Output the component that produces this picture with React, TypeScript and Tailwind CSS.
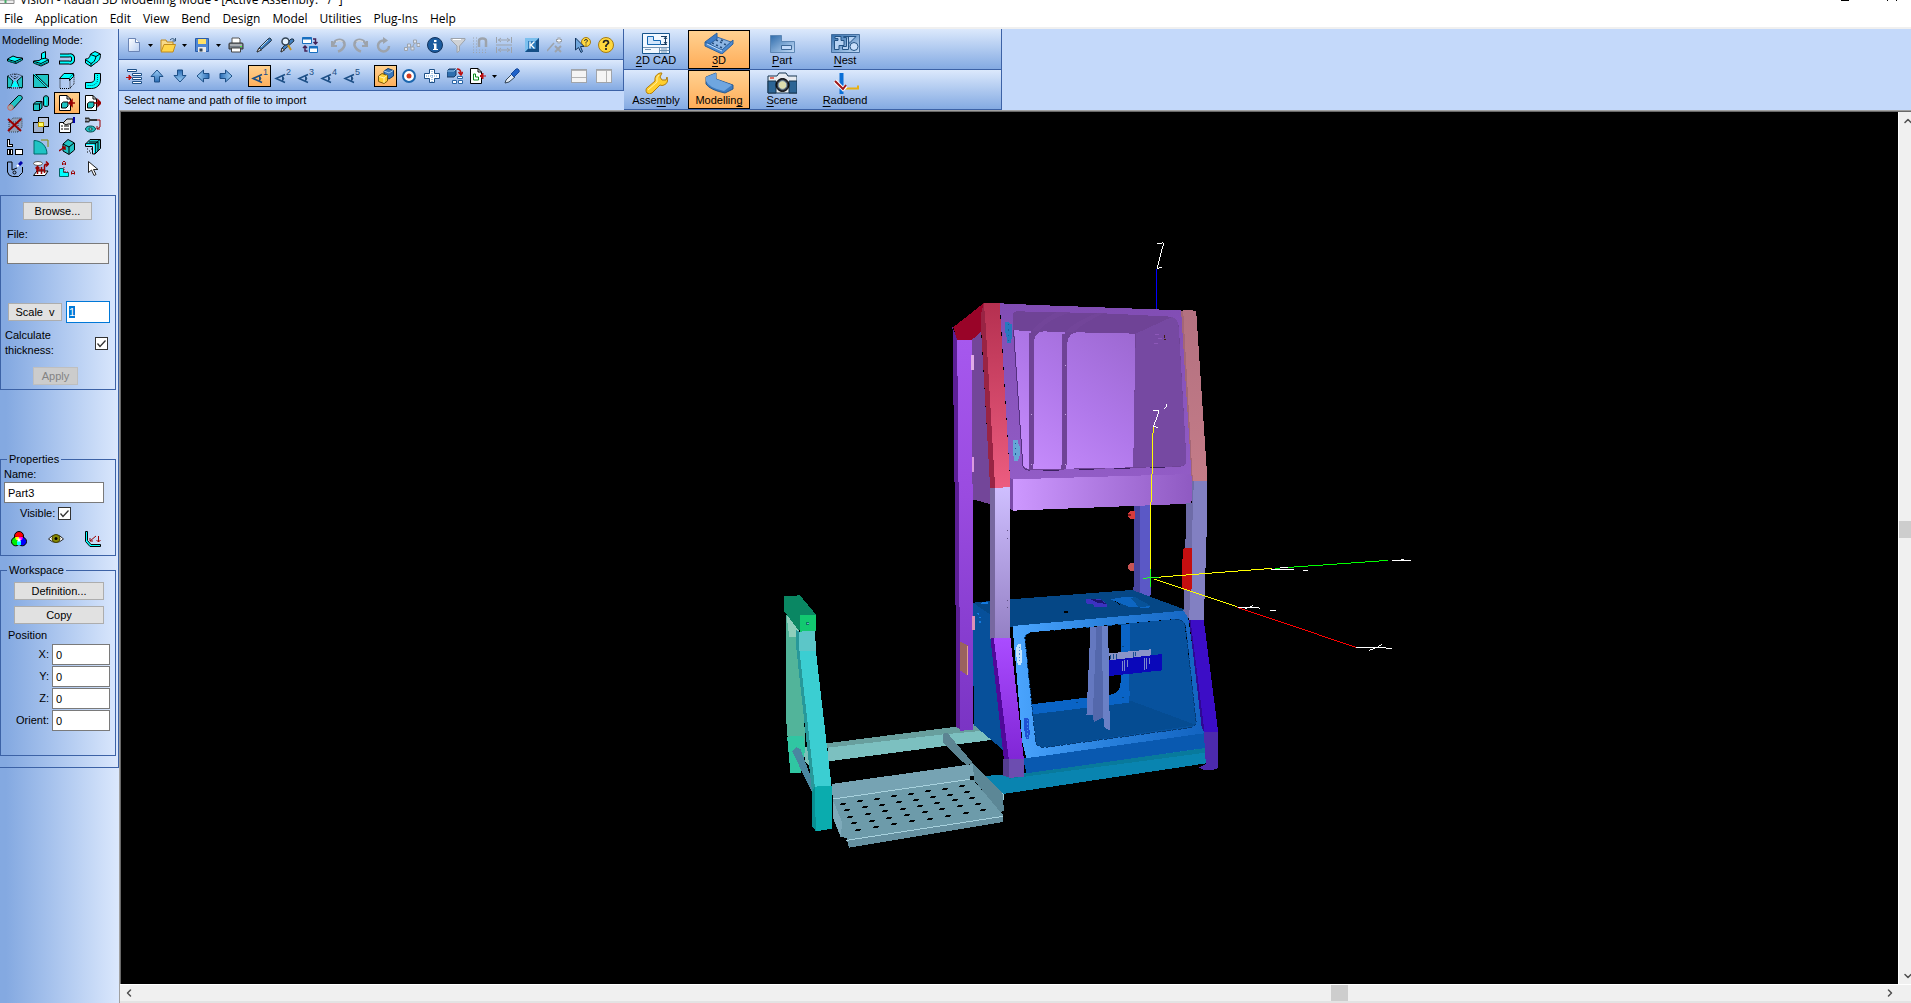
import { ReactNode } from "react";
import { ChevronDown, ChevronLeft, ChevronRight, ChevronUp } from "lucide-react";
import clsx from "clsx";

const MENU = ["File", "Application", "Edit", "View", "Bend", "Design", "Model", "Utilities", "Plug-Ins", "Help"];

const CYAN = "#00ffff";
const TEAL = "#1fc4c4";
const NAVY = "#1d4f86";
const GREY = "#9da3ab";

function Icon({ children, crisp }: { children: ReactNode; crisp?: boolean }) {
  return (
    <svg viewBox="0 0 16 16" className="h-4 w-4 shrink-0" fill="none" shapeRendering={crisp ? "crispEdges" : undefined} aria-hidden="true">
      {children}
    </svg>
  );
}

interface Tool {
  name: string;
  icon: ReactNode;
  active?: boolean;
  menu?: boolean;
}

/* ---------- sidebar mode icons ---------- */

const modeTools: Tool[] = [
  {
    name: "Flat",
    icon: (
      <Icon>
        <path d="M.5 8 6 5l4 1.500L15.500 7v2L9 12.500 4 11 .5 10z" fill={CYAN} stroke="#000" />
        <path d="M1 8.500 8 10.500 15 7.500M8.500 10.500v1.500" stroke="#000" />
        <path d="M1 10 8 12 15 9" stroke="#066" />
      </Icon>
    ),
  },
  {
    name: "Flange",
    icon: (
      <Icon>
        <path d="M.5 10 6 9.500 8.500 8V2.500L12.500.5v7l3 1v3L8 15 .5 12z" fill={CYAN} stroke="#000" />
        <path d="M1 10.500 8 12.500l7-3.500M8.500 8l4-1" stroke="#000" />
        <path d="M1 12 8 14l7-3" stroke="#066" />
      </Icon>
    ),
  },
  {
    name: "Hem",
    icon: (
      <Icon>
        <path d="M1 4.500h9a3 3 0 0 1 4 3.500 3 3 0 0 1-4 3.500H0" stroke="#000" strokeWidth="4" />
        <path d="M1 4.500h9a3 3 0 0 1 4 3.500 3 3 0 0 1-4 3.500H1" stroke={CYAN} strokeWidth="2" />
      </Icon>
    ),
  },
  {
    name: "Rolled sheet",
    icon: (
      <Icon>
        <path d="M.5 8C4 8 5 6 5.500 3L10 .5 15.500 3c0 4-1 7-5 9L6 15.500.5 12z" fill={CYAN} stroke="#000" />
        <path d="M1 9l5 3.500c3-1 4-3 5-7L15 3M6 12.500V15M5.500 3.500 11 5.500" stroke="#000" />
      </Icon>
    ),
  },
  {
    name: "Lofted bend",
    icon: (
      <Icon>
        <path d="M.5 3 6 8 4 14.500H.5z" fill={TEAL} stroke="#022" />
        <path d="M15.500 3 10 8l2 6.500h3.500z" fill={TEAL} stroke="#022" />
        <path d="M4 14 8 7l4 7z" fill={CYAN} />
        <path d="M1 3Q8-1 15 3M8 1v5M4 3l4 3 4-3M0 15h16" stroke="#000" strokeDasharray="1 1" />
      </Icon>
    ),
  },
  {
    name: "Split face",
    icon: (
      <Icon>
        <path d="M.5 1.500V14.500H14zM2.500 1.500h13v12.500z" fill={TEAL} stroke="#000" />
        <path d="M1 1l14 14" stroke={CYAN} />
      </Icon>
    ),
  },
  {
    name: "Sheet from solid",
    icon: (
      <Icon>
        <path d="M.5 5.500 5 .5h9.500l-4 5z" fill={CYAN} stroke="#000" />
        <path d="M1 5.500v10h10v-10M11 15l4-4V1" stroke="#000" strokeDasharray="1 1" />
        <path d="M10.500 5.500v2l4-4v-3" fill={CYAN} stroke="#000" />
      </Icon>
    ),
  },
  {
    name: "Elbow",
    icon: (
      <Icon>
        <path d="M9.500.5h6V7c0 5-4 8.500-9 8.500H.5v-6H5C8 9.500 9.500 8 9.500 6z" fill={CYAN} stroke="#000" />
        <path d="M12.500 2v5c0 3-3 5.500-6 5.500H2" stroke="#055" strokeDasharray="1 1" />
      </Icon>
    ),
  },
  {
    name: "Tube",
    icon: (
      <Icon>
        <path d="M1 11 11.500.5c3-.5 4.500 1.500 3.500 3.500L5 15z" fill={TEAL} stroke="#000" />
        <circle cx="3.500" cy="12.500" r="2.800" fill="#9aa" stroke="#c66" />
      </Icon>
    ),
  },
  {
    name: "Solids",
    icon: (
      <Icon>
        <path d="M10.500 3c0-3 5-3 5 0v7c0 2-5 2-5 0z" fill={TEAL} stroke="#000" />
        <path d="M12.500 3v7" stroke={CYAN} />
        <path d="M.5 9 3 6.500h6V13l-2.500 2.500h-6z" fill={TEAL} stroke="#000" />
        <path d="M.5 9h6v6.500M6.500 9 9 6.500" stroke="#000" />
      </Icon>
    ),
  },
  {
    name: "Import",
    active: true,
    icon: (
      <Icon>
        <path d="M.5.5H8L11.500 4v11.500H.5z" fill="#fff" stroke="#000" />
        <path d="M8 .5V4h3.500" stroke="#000" />
        <path d="M2.500 8.500 4.500 7H9v4l-2 2H2.500z" fill={TEAL} stroke="#000" />
        <path d="M16 8h-5M13 5l-3 3 3 3z" fill="#900" stroke="#900" strokeWidth="1.500" />
      </Icon>
    ),
  },
  {
    name: "Export",
    icon: (
      <Icon>
        <path d="M.5.5H8L11.500 4v11.500H.5z" fill="#fff" stroke="#000" />
        <path d="M8 .5V4h3.500" stroke="#000" />
        <path d="M2.500 8.500 4.500 7H9v4l-2 2H2.500z" fill={TEAL} stroke="#000" />
        <path d="M9 8h4M13 5l3 3-3 3z" fill="#900" stroke="#900" strokeWidth="1.500" />
      </Icon>
    ),
  },
  {
    name: "Delete",
    icon: (
      <Icon>
        <path d="M2 5 6 1h9v9l-4 5H2z" fill="#8ca0bd" />
        <path d="M2 5h9v10M2 5v10h9l4-5V1H6zM11 5l4-4" stroke="#345" strokeDasharray="1 1" />
        <path d="M1 2l13 12M14 2 1 14" stroke="#900" strokeWidth="2" />
      </Icon>
    ),
  },
  {
    name: "Combine",
    icon: (
      <Icon crisp>
        <path d="M5.500.5h10v9h-10z" fill="#b9c6dd" stroke="#000" />
        <path d="M.5 5.500h10v10H.5z" fill="#9fb0cc" stroke="#000" />
        <path d="M5.500 5.500h5v4h-5z" fill="#ff6" stroke="#b90" />
      </Icon>
    ),
  },
  {
    name: "Properties",
    icon: (
      <Icon>
        <path d="M.5 5.500h11v10H.5z" fill="#fff" stroke="#000" />
        <path d="M2 9h2M5 9h5M2 12h2M5 12h5" stroke="#000" />
        <path d="M4 6 8 2h6v3l-3 2H9L7 8z" fill="#ddd" stroke="#000" />
        <path d="M15 0v6" stroke="#00a" strokeWidth="2" />
      </Icon>
    ),
  },
  {
    name: "Edit feature",
    icon: (
      <Icon>
        <path d="M0 1.500h3.500l1 1.500H12M0 4.500h3.500L4.500 3" stroke="#333" strokeWidth="2" />
        <path d="M2 3h2" stroke="#ccc" />
        <ellipse cx="5.500" cy="12" rx="5" ry="3" fill={TEAL} stroke="#044" />
        <ellipse cx="5.500" cy="12" rx="2" ry="1" fill="#fff" stroke="#044" />
        <path d="M12 3h3v7l-3 2M12 9v3h3" stroke="#900" />
      </Icon>
    ),
  },
  {
    name: "Unfold",
    icon: (
      <Icon crisp>
        <path d="M.5.5h2v5h3v2h-5zM.5 10.500h2v5h-2zM3.500 10.500h2v5h-2zM8.500 10.500h7v5h-7z" fill="#fff" stroke="#000" />
      </Icon>
    ),
  },
  {
    name: "Fillet",
    icon: (
      <Icon>
        <path d="M1 1.500C8 1.500 14 7 14 15H1z" fill={TEAL} stroke="#066" />
        <path d="M8 1h7v7" stroke="#880" />
      </Icon>
    ),
  },
  {
    name: "Push face",
    icon: (
      <Icon>
        <path d="M4 5 9 .5 15.500 4v7L10 15.500 4 12z" fill={TEAL} stroke="#000" />
        <path d="M4 5l6 3v7M10 8l5-4" stroke="#000" />
        <path d="M0 12l6-4M3 8h3v3" stroke="#900" strokeWidth="1.500" />
      </Icon>
    ),
  },
  {
    name: "Shell",
    icon: (
      <Icon>
        <path d="M.5 5 5 .5h10.500v9L10 15V5z" fill={TEAL} stroke="#000" />
        <path d="M.5 5v2.500h7V15H10V5zM10 5l5-4.500M4 3h9v9" stroke="#000" />
        <path d="M1 5.500h8.500V14" stroke={CYAN} />
        <path d="M2 10h1M4 12h1M6 10h1M2 13h1M5 14h1" stroke="#000" />
      </Icon>
    ),
  },
  {
    name: "Sketch",
    icon: (
      <Icon>
        <path d="M.5 1v10q1 4 5 4.500h6l4-4V6M.5 1H5v8l5-2" stroke="#000" />
        <circle cx="7.500" cy="11.500" r="1.500" stroke="#000" />
        <path d="M10 5.500l2-2" stroke="#fff" strokeWidth="2" />
        <path d="M12 4 15 1" stroke="#00a" strokeWidth="3" />
      </Icon>
    ),
  },
  {
    name: "Flatten assembly",
    icon: (
      <Icon>
        <path d="M.5 14.500 4 10h11l-3 4.500z" fill="#fff" stroke="#000" />
        <ellipse cx="5" cy="2.500" rx="4.500" ry="2" fill="#fff" stroke="#555" />
        <path d="M4.500 13V5.500M2.500 7.500l2-2 2 2M8.500 13V6M11.500 12V5q0-2 3-2M13 .5 15.500 3 13 5.500M3 9h9" stroke="#900" strokeWidth="1.500" />
      </Icon>
    ),
  },
  {
    name: "Dimension",
    icon: (
      <Icon>
        <path d="M.5 7.500h4v4h5v4h-9z" fill={CYAN} stroke="#066" />
        <path d="M5 6v5h5" stroke="#900" strokeDasharray="1 1" />
        <path d="M3.500 4V1.500L5 0 6.500 1.500V4M4 3h3M12.500 13.500V11L14 9.500 15.500 11v2.500M12.500 12.500h3" stroke="#900" />
      </Icon>
    ),
  },
  {
    name: "Select",
    icon: (
      <Icon>
        <path d="M3.500.5v11l3-2.500 2.500 5.500 2-1-2.500-5H13z" fill="#fff" stroke="#222" />
      </Icon>
    ),
  },
];

/* ---------- toolbar icons ---------- */

function ArrowShape({ turn }: { turn: number }) {
  return (
    <Icon>
      <path
        transform={`rotate(${turn} 8 8)`}
        d="M8 2 14 8.500h-3.500V14h-5V8.500H2z"
        fill="url(#arrowFill)"
        stroke={NAVY}
      />
    </Icon>
  );
}

function ViewShape({ n }: { n: string }) {
  return (
    <svg viewBox="0 0 18 18" className="h-[18px] w-[18px] shrink-0" fill="none" aria-hidden="true">
      <path d="M11 7.500 2 11.500l9 4" stroke={NAVY} strokeWidth="1.500" />
      <path d="M8.500 9q2.500 2.500 0 5z" fill="#123" stroke={NAVY} />
      <text x="12" y="8" fontSize="9" fill={NAVY} fontFamily="Liberation Sans, sans-serif">{n}</text>
    </svg>
  );
}

const fileTools: Tool[][] = [
  [
    {
      name: "New",
      menu: true,
      icon: (
        <Icon>
          <path d="M2.500 1.500h7l4 4v9h-11z" fill="url(#pageFill)" stroke="#6b85b5" />
          <path d="M9.500 1.500v4h4" fill="#fff" stroke="#6b85b5" />
        </Icon>
      ),
    },
    {
      name: "Open",
      menu: true,
      icon: (
        <Icon>
          <path d="M1 14V3h5l1 2h6v3" fill="#f6d98a" stroke="#c08a1c" />
          <path d="M1 15 4 7.500h11.500L13 15z" fill="#ffd54a" stroke="#c08a1c" />
          <path d="M10 3q3-3 5 .5M15.500 1v3h-3" stroke="#357" />
        </Icon>
      ),
    },
    {
      name: "Save",
      menu: true,
      icon: (
        <Icon>
          <path d="M1.500 1.500h13v13h-13z" fill="#4e86d4" stroke="#2b5ca8" />
          <path d="M4 2h8v5H4z" fill="#ffe066" />
          <path d="M4 10h8v5H4z" fill="#e8e8ea" />
          <path d="M5.500 11.500h3v3h-3z" fill="#345" />
        </Icon>
      ),
    },
    {
      name: "Print",
      icon: (
        <Icon>
          <path d="M4 1h7l1 1v5H4z" fill="#fff" stroke="#555" />
          <path d="M1 7q0-1 1-1h12q1 0 1 1v5H1z" fill="#747c86" stroke="#333" />
          <path d="M2 8h12" stroke="#ddd" />
          <path d="M12 9.500h2" stroke="#4e4" />
          <path d="M3.500 11h9v4h-9z" fill="#fff" stroke="#444" />
        </Icon>
      ),
    },
  ],
  [
    {
      name: "Pen",
      icon: (
        <Icon>
          <path d="M1 15l2-4 9-9q2-2 3 0t0 2l-9 8z" fill="#3f7fc0" stroke="#234" />
          <path d="M1 15l2-4 2.500 2z" fill="#eee" stroke="#333" />
          <path d="M5 10l7-7" stroke="#bde" />
        </Icon>
      ),
    },
    {
      name: "Pen settings",
      icon: (
        <Icon>
          <path d="M2 15l1-4 9-9q3-1 3 2l-9 8z" fill="#3f7fc0" stroke="#234" />
          <path d="M2 15l1-4 2.500 2z" fill="#eee" stroke="#333" />
          <circle cx="6.500" cy="4.500" r="3.500" fill="#e4f2ff" stroke="#345" strokeWidth="1.500" />
          <path d="M9 8l3 5" stroke="#c89420" strokeWidth="2" />
        </Icon>
      ),
    },
    {
      name: "Switch window",
      icon: (
        <Icon>
          <path d="M.5.500h9v6h-9zM7.500 9.500h8v6h-8z" fill="#fff" stroke="#176fc0" />
          <path d="M.5 1.500h9M7.500 10.500h8" stroke="#176fc0" strokeWidth="2" />
          <path d="M11 2h2.500v5M11.500 5l2 2 2-2M5.500 14H3V9M1 11l2-2 2 2" stroke="#425" strokeWidth="1.500" />
        </Icon>
      ),
    },
  ],
  [
    {
      name: "Undo",
      icon: (
        <Icon>
          <path d="M2 4v5h5" stroke={GREY} strokeWidth="2" />
          <path d="M3 8q2-6 8-5 4 1 3.500 5.500Q13 13 8 14.500" stroke={GREY} strokeWidth="2.500" />
          <path d="M6 4.500q4-2 6.500 0" stroke="#dfe3e8" />
        </Icon>
      ),
    },
    {
      name: "Redo",
      icon: (
        <Icon>
          <path d="M14 4v5H9" stroke={GREY} strokeWidth="2" />
          <path d="M13 8q-2-6-8-5-4 1-3.500 5.500Q3 13 8 14.500" stroke={GREY} strokeWidth="2.500" />
          <path d="M10 4.500q-4-2-6.500 0" stroke="#dfe3e8" />
        </Icon>
      ),
    },
    {
      name: "Refresh",
      icon: (
        <Icon>
          <path d="M13 9a5.500 5.500 0 1 1-5-5.500" stroke={GREY} strokeWidth="2.500" />
          <path d="M7 0v7l5-3.500z" fill={GREY} />
        </Icon>
      ),
    },
  ],
  [
    {
      name: "Nodes",
      icon: (
        <Icon>
          <path d="M2 12l3-3 3 2 3-6 4 3" stroke={GREY} />
          <path d="M.5 10.500h3v3h-3zM3.500 7h3v3h-3zM7 10h3v3H7zM9.500 3h3v3h-3zM13 6.500h3v3h-3z" fill="#dfe6f2" stroke={GREY} />
        </Icon>
      ),
    },
    {
      name: "Information",
      icon: (
        <Icon>
          <circle cx="8" cy="8" r="7.500" fill="#1c5c9e" stroke="#12335e" />
          <path d="M7 3h2.500v2H7zM6 6.500h3.500V12H11v1H6v-1h1V7.500H6z" fill="#fff" />
        </Icon>
      ),
    },
    {
      name: "Filter",
      icon: (
        <Icon>
          <path d="M1 1.500h14V3L9.500 9v5L7 15.500V9L1 3z" fill="#cfd2d6" stroke={GREY} />
          <path d="M3 2.500h8" stroke="#fff" />
        </Icon>
      ),
    },
    {
      name: "Snap",
      icon: (
        <Icon>
          <path d="M6 10V4q0-2.500 3.500-2.500T13 4v6" stroke={GREY} strokeWidth="2.500" />
          <path d="M0 1h5M0 4h4M0 7h4M0 10h4M0 13h15M0 15.500h15" stroke={GREY} strokeDasharray="1 2" />
        </Icon>
      ),
    },
    {
      name: "Distance",
      icon: (
        <Icon>
          <path d="M.5 0v6M15.500 0v6M2 3h12M.5 10v6M15.500 10v6M2 13h12M0 8h16M5 1 2.500 3 5 5M11 1l2.500 2L11 5M5 11l-2.500 2L5 15M11 11l2.500 2-2.500 2" stroke={GREY} />
        </Icon>
      ),
    },
  ],
  [
    {
      name: "Keyboard",
      icon: (
        <Icon>
          <path d="M1 1h14v14H1z" fill="#2f7dbd" />
          <path d="M1 15V1h14l-3 3H4v8z" fill="#7cc0ee" />
          <path d="M1 15h14V1l-3 3v8H4z" fill="#154f86" />
          <path d="M6 4.500v7M10.500 4.500 7 8l3.500 3.500" stroke="#fff" strokeWidth="1.300" />
        </Icon>
      ),
    },
    {
      name: "Points",
      icon: (
        <Icon>
          <path d="M0 14 7 6" stroke={GREY} strokeWidth="1.500" />
          <path d="M9 3.500h6M12 .5v6" stroke={GREY} strokeWidth="3" />
          <path d="M8 9l6 6M14 9l-6 6" stroke={GREY} strokeWidth="2" />
          <path d="M10 3.500h4M12 1.500v4" stroke="#fff" />
        </Icon>
      ),
    },
  ],
  [
    {
      name: "Context help",
      icon: (
        <Icon>
          <circle cx="11" cy="5" r="4.500" fill="#ffd83e" stroke="#a67c12" />
          <path d="M9.500 4q0-1.500 1.500-1.500T12.500 4L11 5.500v1M11 7.500v1" stroke="#333" />
          <path d="M.5 1v12l3-2.500L6 15.500l1.500-1L5.500 9.500H9z" fill="#6fa6dc" stroke="#16365f" />
        </Icon>
      ),
    },
    {
      name: "Help",
      icon: (
        <Icon>
          <circle cx="8" cy="8" r="7.500" fill="#ffd83e" stroke="#a67c12" />
          <path d="M5.500 6q0-2.500 2.500-2.500T10.500 6L8 8.500v1.500M8 11v2" stroke="#222" strokeWidth="1.700" />
        </Icon>
      ),
    },
  ],
];

const viewTools: Tool[][] = [
  [
    {
      name: "Tree",
      icon: (
        <Icon>
          <path d="M1.500 1.500h9v2h-9zM6.500 5.500h9v2h-9zM6.500 9.500h9v2h-9zM6.500 13.500h9v2h-9z" fill="#fff" stroke={NAVY} />
          <path d="M0 9.500h5M3 7l2.500 2.500L3 12z" fill="#b11" stroke="#b11" />
        </Icon>
      ),
    },
    { name: "Up", icon: <ArrowShape turn={0} /> },
    { name: "Down", icon: <ArrowShape turn={180} /> },
    { name: "Left", icon: <ArrowShape turn={270} /> },
    { name: "Right", icon: <ArrowShape turn={90} /> },
  ],
  [
    { name: "View 1", active: true, icon: <ViewShape n="1" /> },
    { name: "View 2", icon: <ViewShape n="2" /> },
    { name: "View 3", icon: <ViewShape n="3" /> },
    { name: "View 4", icon: <ViewShape n="4" /> },
    { name: "View 5", icon: <ViewShape n="5" /> },
  ],
  [
    {
      name: "Shaded",
      active: true,
      icon: (
        <Icon>
          <path d="M6 3l4-2.500 5.500 2V8L11 11 6 9z" fill="#3b78bd" stroke="#173c68" />
          <path d="M6 3l5 2 4-2.500" stroke="#a8cdf0" />
          <path d="M.5 8 4 5.500 9.500 7.500V13L6 15.500l-5.500-2z" fill="#ffcf33" stroke="#7b5a08" />
          <path d="M1 8.500 6 10l3-2.500M6 10v5" stroke="#fff3b0" />
        </Icon>
      ),
    },
    {
      name: "Target",
      icon: (
        <Icon>
          <circle cx="8" cy="8" r="6" fill="#fff" stroke="#1b66ae" strokeWidth="2" />
          <circle cx="8" cy="8" r="2.500" fill="#d33a1c" />
        </Icon>
      ),
    },
    {
      name: "Add section",
      icon: (
        <Icon>
          <path d="M5.500 1.500h5v4h5v5h-5v4h-5v-4h-5v-5h5z" fill="#fff" stroke={NAVY} />
          <path d="M8 3v11M2 8h12" stroke="#5a93cc" strokeDasharray="1 1" />
        </Icon>
      ),
    },
    {
      name: "Explode",
      icon: (
        <Icon>
          <path d="M0 3l2-2h7v6l-2 2H0z" fill="#2f6faf" stroke="#163b66" />
          <path d="M0 3h7l2-2" stroke="#9cc8ee" />
          <path d="M10 1q4 0 4 5M11.500 4l2.500 3 2-3" stroke="#b11" strokeWidth="1.500" />
          <path d="M10.500 8.500h5v2h-5zM5.500 12.500h4v3h-4zM11.500 12.500h4v3h-4z" fill="#fff" stroke="#2a65a5" />
        </Icon>
      ),
    },
    {
      name: "Import part",
      menu: true,
      icon: (
        <Icon>
          <path d="M.5.500H8L11.500 4v11.500H.5z" fill="#fff" stroke="#000" />
          <path d="M8 .5V4h3.500" stroke="#000" />
          <path d="M3.500 6v6h5V9h-3V6z" stroke="#0a8a1a" />
          <path d="M16 8h-5M13 5l-3 3 3 3z" fill="#b11" stroke="#b11" />
        </Icon>
      ),
    },
    {
      name: "Picker",
      icon: (
        <Icon>
          <path d="M1 15l1-3 6-6 3 3-6 5z" fill="#dfe9f5" stroke="#345" />
          <path d="M7 6l5-5q2-1 3 1t-1 3l-4 4z" fill="#1f62c8" stroke="#174a9c" />
        </Icon>
      ),
    },
  ],
];

function ToolButton({ tool }: { tool: Tool }) {
  return (
    <>
      <button
        type="button"
        aria-label={tool.name}
        aria-pressed={tool.active}
        className={clsx(
          "flex h-[22px] w-[23px] items-center justify-center",
          tool.active && "border border-black bg-linear-to-b from-[#ffd08c] to-[#ffb05c]"
        )}
      >
        {tool.icon}
      </button>
      {tool.menu && (
        <button type="button" aria-label={`${tool.name} options`} className="flex h-[22px] w-[11px] items-center justify-center">
          <svg viewBox="0 0 5 3" className="h-[3px] w-[5px]" aria-hidden="true">
            <path d="M0 0h5L2.500 3z" />
          </svg>
        </button>
      )}
    </>
  );
}

/* ---------- mode switch panel ---------- */

function BigIcon({ children }: { children: ReactNode }) {
  return (
    <svg viewBox="0 0 30 22" className="h-[22px] w-[30px]" fill="none" aria-hidden="true">
      {children}
    </svg>
  );
}

interface Mode {
  label: [string, string, string];
  icon: ReactNode;
  active?: boolean;
}

const modeRows: Mode[][] = [
  [
    {
      label: ["", "2", "D CAD"],
      icon: (
        <BigIcon>
          <path d="M1.500 1.500h27v20h-27z" fill="#f2f8ff" stroke="#16548c" />
          <path d="M6.500 12.500v-8h6v4h7v4z" fill="#d2e6fc" stroke="#1567b0" />
          <path d="M2 15.500h26M18.500 16v5M18.500 18.500h10M4 17.500h6M20 17h6M20 20h6" stroke="#7395b5" />
          <path d="M20 4.500h6M20 12.500h6M24.500 5v7M23 7l1.500-2L26 7M23 10l1.500 2 1.500-2" stroke="#163d63" />
        </BigIcon>
      ),
    },
    {
      label: ["", "3", "D"],
      active: true,
      icon: (
        <BigIcon>
          <path d="M3 10 13 5l14 5-9 10z" fill="#8db6e4" stroke="#3a6ca8" />
          <path d="M1 10 13 1v6L4 13z" fill="#3d7dc8" stroke="#2d629f" />
          <path d="M1 10v4l17 8 11-10V8l-11 10z" fill="#4d8ad0" stroke="#2d629f" />
          <path d="M3 12 18 19" stroke="#c6e0fa" />
          <path d="M8 11l2 .8M12 8l2 .8M12 13l2 .8M16 10l2 .8M16 15l2 .8M20 12l2 .8M17 8l2 .8" stroke="#264f80" strokeWidth="1.500" />
        </BigIcon>
      ),
    },
    {
      label: ["", "P", "art"],
      icon: (
        <BigIcon>
          <path d="M3.500 3.500h11v6h13v11h-24z" fill="url(#partFill)" stroke="#5d87b5" />
          <path d="M14.500 13.500h10v4h-10z" fill="#c2dafa" stroke="#3d6797" />
        </BigIcon>
      ),
    },
    {
      label: ["", "N", "est"],
      icon: (
        <BigIcon>
          <path d="M1.500 2.500h28v18h-28z" fill="url(#partFill)" stroke="#456f9f" />
          <path d="M5 4.500h6v4h3v5H9v4H4.500v-9H8v-2H5zM12.500 17.500v-3h4v-9h-3v-1h5v13zM18 4.500h8l-7 7z" fill="#b7d3f4" stroke="#235385" />
          <circle cx="24" cy="14.500" r="4" fill="#c9e0fb" stroke="#235385" />
        </BigIcon>
      ),
    },
  ],
  [
    {
      label: ["Asse", "m", "bly"],
      icon: (
        <BigIcon>
          <path d="M5 18q0-2 2-3l7-6q-1-6 5-8h2l-2 4 2 3h4l1-3q2 6-3 8-2 1-4 0l-8 8q-3 2-5 0-1-1-1-3z" fill="#ffcf2e" stroke="#b07d10" />
          <path d="M7 18l9-8q-1-5 2-7" stroke="#fff0a8" />
        </BigIcon>
      ),
    },
    {
      label: ["Modellin", "g", ""],
      active: true,
      icon: (
        <BigIcon>
          <path d="M2 5 12 1v6l17 6v4l-8 4Q6 18 2 12z" fill="#3f7cc0" stroke="#28598f" />
          <path d="M2 5 12 1v6l16 6-8 6Q5 16 2 9z" fill="#6fa6e0" />
        </BigIcon>
      ),
    },
    {
      label: ["", "S", "cene"],
      icon: (
        <BigIcon>
          <path d="M1 4h9l2-3h7l2 3h9v17H1z" fill="#e7ebf0" stroke="#16344f" />
          <path d="M1 9h8v12H1zM22 9h8v12h-8z" fill="#2d6595" stroke="#16344f" />
          <path d="M3 6h4" stroke="#d43" strokeWidth="1.500" />
          <circle cx="15.500" cy="13" r="6.500" fill="#2a2f38" stroke="#000" />
          <circle cx="15.500" cy="13" r="4.300" fill="#dcdcae" stroke="#7a94ad" />
        </BigIcon>
      ),
    },
    {
      label: ["", "R", "adbend"],
      icon: (
        <BigIcon>
          <path d="M11.500 1v21" stroke="#0a6fd6" strokeWidth="4" />
          <path d="M15 16.500h13v-3" stroke="#e8b010" strokeWidth="2" />
          <path d="M5 9l8 8 3-3" stroke="#fff" strokeWidth="4" />
          <path d="M5 9l8 8 3-4" stroke="#a01818" strokeWidth="2" />
        </BigIcon>
      ),
    },
  ],
];

function ModeButton({ mode }: { mode: Mode }) {
  const [before, key, after] = mode.label;
  return (
    <button
      type="button"
      aria-pressed={!!mode.active}
      className={clsx(
        "flex h-[39px] w-[62px] flex-col items-center border pt-px text-[11px] leading-3",
        mode.active ? "border-black bg-linear-to-b from-[#ffd190] to-[#ffad58]" : "border-transparent"
      )}
    >
      {mode.icon}
      <span>
        {before}
        <span className="underline underline-offset-2">{key}</span>
        {after}
      </span>
    </button>
  );
}

/* ---------- sidebar controls ---------- */

const pushButton = "h-[18px] border border-[#adadad] bg-[#e1e1e1] text-center leading-4";
const textBox = "border border-[#7a7a7a] bg-white pl-[3px] pr-0 leading-4 outline-none";

function Tick({ id }: { id: string }) {
  return (
    <span className="relative block h-[13px] w-[13px]">
      <input id={id} type="checkbox" defaultChecked className="peer block h-[13px] w-[13px] appearance-none border border-[#333] bg-white" />
      <svg viewBox="0 0 13 13" className="pointer-events-none absolute inset-0 hidden peer-checked:block" fill="none" aria-hidden="true">
        <path d="M2.500 6.500 5 9.500l5.500-6" stroke="#333" strokeWidth="1.300" />
      </svg>
    </span>
  );
}

function Field({ label }: { label: string }) {
  return (
    <label className="flex items-center justify-end gap-[3px]">
      {label}
      <input defaultValue="0" className={clsx(textBox, "h-[21px] w-[58px]")} />
    </label>
  );
}

function Sidebar() {
  return (
    <aside className="w-[119px] shrink-0 bg-linear-to-r from-[#84a9e1] from-5% to-[#dbe8fd]">
      <div className="border-b border-r border-[#3c62a6] pb-[11px] pt-1">
        <p className="pl-[2px] leading-[15px]">Modelling Mode:</p>
        <div className="grid w-[106px] grid-cols-4 pl-[2px]">
          {modeTools.map((tool) => (
            <button
              key={tool.name}
              type="button"
              aria-label={tool.name}
              className={clsx(
                "flex h-[22px] items-center justify-center",
                tool.active && "border border-black bg-linear-to-b from-[#ffd08c] to-[#ffb05c]"
              )}
            >
              {tool.icon}
            </button>
          ))}
        </div>

        <section className="mr-[2px] mt-[15px] border border-[#3c62a6] pb-1 pl-[6px] pr-[5px] pt-1.5">
          <button type="button" className={clsx(pushButton, "ml-4 block w-[69px]")}>Browse...</button>
          <label htmlFor="file" className="mt-[7px] block leading-[14px]">File:</label>
          <input id="file" readOnly className="mt-[2px] block h-[21px] w-[102px] border border-[#7a7a7a] bg-[#f0f0f0] px-1 outline-none" />
          <div className="mt-[37px] flex items-center justify-between">
            <button type="button" className={clsx(pushButton, "ml-px w-[54px] whitespace-pre")}>{"Scale  v"}</button>
            <input
              aria-label="Scale"
              defaultValue="1"
              autoFocus
              onFocus={(event) => event.target.select()}
              className="h-[22px] w-[44px] border border-[#0078d7] bg-white pl-[2px] leading-4 caret-[#ff8728] outline-none selection:bg-[#0078d7] selection:text-white"
            />
          </div>
          <div className="-ml-[2px] mt-[5px] flex items-center justify-between pr-[2px]">
            <label htmlFor="thickness" className="w-16 leading-[15px]">Calculate thickness:</label>
            <Tick id="thickness" />
          </div>
          <button type="button" disabled className="ml-[26px] mt-[9px] block h-[18px] w-[45px] border border-[#bfbfbf] bg-[#cccccc] leading-4 text-[#838383]">
            Apply
          </button>
        </section>

        <fieldset className="mr-[2px] mt-[61px] border border-[#3c62a6] pb-2 pl-[3px]">
          <legend className="ml-[3px] px-[2px] leading-4">Properties</legend>
          <label htmlFor="name" className="block leading-[15px]">Name:</label>
          <input id="name" defaultValue="Part3" className={clsx(textBox, "block h-[21px] w-[100px]")} />
          <div className="mt-1 flex h-[13px] items-center gap-[3px] pl-4">
            <label htmlFor="visible">Visible:</label>
            <Tick id="visible" />
          </div>
          <div className="mt-[11px] flex gap-[21px] pl-[7px]">
            <button type="button" aria-label="Colour">
              <Icon>
                <circle cx="8" cy="5" r="4.500" fill="#f00" stroke="#000" />
                <circle cx="4.800" cy="10.500" r="4.300" fill="#0e0" stroke="#000" />
                <circle cx="11.200" cy="10.500" r="4.300" fill="#00f" stroke="#000" />
                <path d="M4 6h4v3H5z" fill="#ff0" />
                <path d="M8 6h4l-1 3H8z" fill="#f0f" />
                <path d="M6 10h4v4H6z" fill="#0ff" />
                <path d="M6.500 7.500h3v3h-3z" fill="#fff" />
              </Icon>
            </button>
            <button type="button" aria-label="Visibility">
              <Icon>
                <path d="M.5 8Q8-.5 15.500 8 8 15 .5 8z" fill="#fff" stroke="#222" />
                <circle cx="8" cy="7.500" r="4" fill="#8a8a00" stroke="#440" />
                <circle cx="8" cy="7.500" r="1.500" fill="#000" />
              </Icon>
            </button>
            <button type="button" aria-label="Bend angle">
              <Icon>
                <path d="M.5.500h2v9l3.500 4h9.500v2H5l-4.500-5z" fill={CYAN} stroke="#000" />
                <path d="M11 5 5 10M5 7v3h3M13.500 5v6M11.500 9l2 2 2-2" stroke="#900" />
              </Icon>
            </button>
          </div>
        </fieldset>

        <fieldset className="mr-[2px] mt-1.5 border border-[#3c62a6] pb-6 pl-[7px] pr-[5px]">
          <legend className="-ml-px px-[2px] leading-4">Workspace</legend>
          <button type="button" className={clsx(pushButton, "ml-[6px] mt-1 block w-[90px]")}>Definition...</button>
          <button type="button" className={clsx(pushButton, "ml-[6px] mt-1.5 block w-[90px]")}>Copy</button>
          <p className="mt-1 leading-[14px]">Position</p>
          <div className="mt-[2px] flex flex-col gap-px">
            <Field label="X:" />
            <Field label="Y:" />
            <Field label="Z:" />
            <Field label="Orient:" />
          </div>
        </fieldset>
      </div>
    </aside>
  );
}

/* ---------- 3D scene ---------- */

// tread perforations: first and last hole of every row
const holeRows = [
  [219, 672, 575, 618],
  [231, 690, 590, 636],
  [240, 710, 605, 653],
  [251, 730, 622, 671],
  [262, 750, 639, 690],
];

function Scene() {
  return (
    <svg
      viewBox="120 112 1778 872"
      preserveAspectRatio="xMidYMid slice"
      className="absolute inset-0 h-full w-full"
      shapeRendering="crispEdges"
      role="img"
      aria-label="Assembly model"
    >
      <defs>
        <linearGradient id="post" x1="0" y1="0" x2="0" y2="1">
          <stop offset="0" stopColor="#a658ee" />
          <stop offset=".4" stopColor="#9a4be0" />
          <stop offset="1" stopColor="#7a34c4" />
        </linearGradient>
        <linearGradient id="redFace" x1="0" y1="0" x2="0" y2="1">
          <stop offset="0" stopColor="#b53050" />
          <stop offset="1" stopColor="#ec5d80" />
        </linearGradient>
        <linearGradient id="lilac" x1="0" y1="0" x2="0" y2="1">
          <stop offset="0" stopColor="#cfbfff" />
          <stop offset="1" stopColor="#9480c4" />
        </linearGradient>
        <linearGradient id="frame" x1="0" y1="0" x2="0" y2="1">
          <stop offset="0" stopColor="#814db4" />
          <stop offset="1" stopColor="#955fc9" />
        </linearGradient>
        <linearGradient id="back" gradientUnits="userSpaceOnUse" x1="280" y1="740" x2="600" y2="340">
          <stop offset="0" stopColor="#c68cfc" />
          <stop offset=".5" stopColor="#b078ea" />
          <stop offset="1" stopColor="#9d69d2" />
        </linearGradient>
        <linearGradient id="lip" x1="0" y1="0" x2="1" y2="0">
          <stop offset="0" stopColor="#cd98ff" />
          <stop offset="1" stopColor="#8f5ac2" />
        </linearGradient>
        <linearGradient id="pink" x1="0" y1="0" x2="0" y2="1">
          <stop offset="0" stopColor="#b37180" />
          <stop offset="1" stopColor="#c47c88" />
        </linearGradient>
        <linearGradient id="blueFrame" x1="0" y1="0" x2="1" y2="0">
          <stop offset="0" stopColor="#4ca6ff" />
          <stop offset=".5" stopColor="#2880dc" />
          <stop offset="1" stopColor="#1263c0" />
        </linearGradient>
        <linearGradient id="leg" x1="0" y1="0" x2="0" y2="1">
          <stop offset="0" stopColor="#aa4cff" />
          <stop offset="1" stopColor="#8026d6" />
        </linearGradient>
      </defs>

      {/* guard rail, beam and tread */}
      <g transform="translate(770 580) scale(.33333)">
        <path d="M100 502 114 499 122 560 103 545z" fill="#7cc0b8" />
        <path d="M168 490 612 433 645 458 168 504z" fill="#689f9e" />
        <path d="M172 503 520 463 640 452 662 480 174 544z" fill="#7cc0c0" />
        <path d="M519 461 530 458 608 550 588 556 519 490z" fill="#5c8492" />
        <path d="M48 105 80 140 102 440 104 500 90 578 60 580 48 430z" fill="#52b49a" />
        <path d="M48 105 85 140 85 170 56 170z" fill="#8fcfbc" />
        <path d="M50 470 98 467 104 510 90 578 60 580z" fill="#30c6a2" />
        <path d="M65 514 78 502 90 508 132 620 125 638z" fill="#4a86a0" />
        <path d="M42 49 88 46 137 104 88 107 87 155 42 95z" fill="#0a8763" />
        <path d="M88 106 137 104 137 153 88 156z" fill="#12c870" />
        <path d="M108 125h9v10h-9z" fill="#0a7a60" />
        <path d="M111 128h5v5h-5z" fill="#6ac" />
        <path d="M78 150 86 155 88 212 133 620 125 640 78 210z" fill="#27989a" />
        <path d="M86 155 134 152 136 212 87 213z" fill="#5cc6c8" />
        <path d="M87 213 136 212 183 617 133 621z" fill="#3bced2" />
        <path d="M126 635 133 620 183 617 186 746 136 754 126 740z" fill="#0aacae" />
        <path d="M126 635 133 620 136 754 126 740z" fill="#089092" />

        <path d="M187 656 605 596 698 705 698 726 235 803 228 774 210 770 187 712z" fill="#6d9baa" />
        <path d="M183 612 608 552 610 597 187 657z" fill="#76a3b3" />
        <path d="M608 552 697 640 700 692 690 697 610 600z" fill="#5c8796" />
        <path d="M187 660 214 725 212 770 187 712z" fill="#7eaaba" />
        <path d="M230 780 698 710 698 726 235 803z" fill="#6590a0" />
        <path d="M187 657 605 597" stroke="#a8d2de" strokeWidth="3" />
        <path d="M228 781 698 709" stroke="#a8d2de" strokeWidth="3" />
        <path d="M697 640 700 660" stroke="#9fd3dd" strokeWidth="3" />
        <path d="M600 588h12v12h-12z" fill="#000" />
        {holeRows.map(([x1, y1, x2, y2]) =>
          [0, 1, 2, 3, 4, 5, 6, 7].map((i) => (
            <path
              key={`${x1}-${i}`}
              d="M-9 0h3v-3h15v3h-3v3H-9z"
              transform={`translate(${x1 + ((x2 - x1) * i) / 7} ${y1 + ((y2 - y1) * i) / 7})`}
              fill="#000"
            />
          ))
        )}
      </g>

      {/* lower cabinet */}
      <g transform="translate(930 480) scale(.33333)">
        <path d="M165 888 288 878 825 804 827 850 218 942z" fill="#0984b0" />
        <path d="M288 880 825 804 826 818 230 897z" fill="#087a9c" />
        <path d="M611 74 628 74 628 350 609 330z" fill="#48449e" />
        <path d="M628 74 663 72 660 352 628 345z" fill="#5b58c6" />
        <path d="M592 99 600 94 614 94 614 116 600 117 592 110z" fill="#d83c3c" />
        <path d="M592 256 600 250 611 250 611 272 600 272 592 266z" fill="#c85454" />
        <path d="M594 102 602 102 602 109 594 109z" fill="#801818" />

        <path d="M127 368 190 400 228 815 215 808 130 735z" fill="#07509a" />
        <path d="M127 368 240 358 605 330 772 392 740 405 247 440 180 440 180 404z" fill="#054786" />
        <path d="M150 368 175 366 170 373 152 373zM138 398 146 398 144 406zM146 410h6v4h-6zM145 422h6v8h-6z" fill="#147ae0" />
        <path d="M540 358 585 350 615 352 662 378 655 383 600 382z" fill="#0d66c2" />
        <path d="M600 353 615 352 662 378 625 382z" fill="#075298" />
        <path d="M540 358 565 368 570 376 560 368z" fill="#000" />
        <path d="M468 358 510 358 530 372 530 380 492 382 490 374 468 370z" fill="#3c32c0" />
        <path d="M482 358 510 359 528 372 500 368z" fill="#1c1470" />
        <path d="M400 393h14v5h-14z" fill="#000" />

        <path d="M280 460 760 415 800 740 330 806z" fill="#07529e" />
        <path d="M303 700 600 662 797 735 335 802 310 790z" fill="#054c92" />
        <path d="M303 672 570 635 598 632 596 668 470 683 306 703z" fill="#0a64c6" />
        <path d="M568 436 598 432 596 668 560 640z" fill="#0a64c6" />
        <path d="M283 478Q284 460 310 457L572 434 570 615Q566 640 540 644L303 673z" fill="#000" />
        <path d="M576 498h6v4h-6zM576 650h6v4h-6zM436 666h6v4h-6z" fill="#054786" />

        <path
          fillRule="evenodd"
          d="M246 438 770 391 822 762 288 836 276 790zM283 472 300 640 316 788Q322 803 345 802L780 743Q798 738 797 726L765 436Q760 416 735 417L310 456Q284 458 283 472z"
          fill="url(#blueFrame)"
        />
        <path d="M283 472 300 640 316 788Q322 803 345 802L780 743Q798 738 797 726L765 440Q760 418 735 418" fill="none" stroke="#043a74" strokeWidth="3" strokeDasharray="12 4" />
        <path d="M278 836 820 760 824 804 288 880z" fill="#0959b0" />
        <path d="M258 500 264 492 270 492 276 530 272 556 262 556 258 530z" fill="#c4e4fc" />
        <path d="M280 715 294 715 298 760 294 778 286 778 280 740z" fill="#1e50d4" />
        <path d="M268 500v50M290 720v54" stroke="#4a90e0" strokeWidth="3" strokeDasharray="4 6" />

        <path d="M480 441 498 441 487 705 468 704z" fill="#6478c0" />
        <path d="M498 440 517 437 518 712 490 726 487 705z" fill="#5468ac" />
        <path d="M515 437 533 437 538 752 522 742 517 700z" fill="#6a80c6" />
        <path d="M535 520 662 508 663 526 540 541z" fill="#8a94c8" />
        <path d="M537 541 695 522 695 571 537 588z" fill="#0a08ba" />
        <path d="M575 543v30M582 541v32M590 540v20M641 534v36M648 534v34M656 533v20" stroke="#7c88cc" strokeWidth="3" />
        <path d="M541 524v14M549 523v14M557 522v14M608 517v14M615 516v12" stroke="#1a4f94" strokeWidth="3" />
      </g>

      {/* uprights and upper cabinet */}
      <g transform="translate(930 220) scale(.33333)">
        <path d="M122 350 152 335 182 853 126 838z" fill="#734699" />
        <path d="M66 322 82 357 92 1532 78 1520 72 780z" fill="#5c1f96" />
        <path d="M80 357 124 358 126 780 129 1530 90 1532 84 780z" fill="url(#post)" />
        <path d="M123 405h9v45h-9z" fill="#e0aae8" />
        <path d="M126 711h6v45h-6z" fill="#dc9ae0" />
        <path d="M126 1188h9v42h-9z" fill="#dc90b8" />
        <path d="M87 1263 112 1277 110 1365 90 1352z" fill="#9a625e" />
        <path d="M112 1277 110 1365" stroke="#e0a090" strokeWidth="3" />
        <path d="M68 322 160 249 152 335 124 360 80 359z" fill="#990428" />

        <path d="M208 250 318 255 752 271 784 765 783 850 248 872 240 868 240 800z" fill="url(#frame)" />
        <path d="M248 282Q250 274 262 274L520 280 722 290Q742 296 745 320L768 722Q768 738 750 740L300 751Q282 750 277 738L249 330z" fill="#6f4396" />
        <path d="M616 341 724 291Q742 296 744 320L768 722Q767 737 750 739L607 742z" fill="#7649a2" />
        <path d="M305 333Q330 300 380 276L420 277Q350 300 325 333zM405 335Q440 300 500 280L520 280Q455 310 430 336z" fill="#724599" />
        <path d="M251 331 303 333 297 748 290 747 275 735z" fill="url(#back)" />
        <path d="M309 748 311 362Q314 337 338 334L403 337 394 746z" fill="url(#back)" />
        <path d="M408 746 411 367Q414 339 440 337L615 341 608 742z" fill="url(#back)" />
        <path d="M297 340 303 340 309 420 309 748 295 748zM396 342 404 342 408 420 407 746 393 746z" fill="#6f4396" />
        <path d="M249 330 277 738Q282 750 300 751" fill="none" stroke="#553080" strokeWidth="3" />
        <path d="M338 751h48M446 748h45M552 745h48M658 742h46" stroke="#3c2060" strokeWidth="3" />
        <path d="M674 343h12M672 370h12M684 355h12" stroke="#8c58b8" strokeWidth="3" />
        <path d="M702 345v10M700 358h6" stroke="#402010" strokeWidth="3" />
        <path d="M240 775 249 778 249 872 240 868z" fill="#7a4aa8" />
        <path d="M248 778 784 762 783 851 248 872z" fill="url(#lip)" />
        <path d="M222 305 236 305 238 313 245 313 245 352 240 368 228 368 230 358 224 335z" fill="#2878be" />
        <path d="M246 660 262 660 262 668 268 680 268 705 262 722 250 722z" fill="#66a6d6" />
        <path d="M234 312v50M256 668v50" stroke="#1a5c98" strokeWidth="3" strokeDasharray="4 12" />
        <path d="M303 582h3v3h-3zM403 582h3v3h-3zM405 434h3v3h-3zM303 731h3v3h-3zM403 731h3v3h-3z" fill="#c8a8e8" />

        <path d="M159 252 150 290 179 805 195 805 165 290z" fill="#992444" />
        <path d="M159 249 207 249 212 330 240 802 194 805 164 290z" fill="url(#redFace)" />
        <path d="M180 804 195 804 195 1256 180 1256z" fill="#7868a0" />
        <path d="M195 804 240 801 240 1256 195 1256z" fill="url(#lilac)" />
        <path d="M231 930h3v3h-3zM231 954h3v3h-3zM231 1140h3v3h-3zM231 1161h3v3h-3z" fill="#5c5080" />
        <path d="M180 1255 191 1255 236 1618 220 1618z" fill="#50089a" />
        <path d="M190 1255 240 1255 280 1618 235 1618z" fill="url(#leg)" />
        <path d="M219 1618 236 1618 236 1673 219 1667z" fill="#553e90" />
        <path d="M235 1618 280 1618 280 1670 235 1674z" fill="#6c4db0" />

        <path d="M752 275 760 271 792 783 784 783z" fill="#a46676" />
        <path d="M758 270 797 272 831 783 787 783z" fill="url(#pink)" />
        <path d="M768 850 784 850 785 783 792 783 780 1203 759 1172z" fill="#6e6ca8" />
        <path d="M790 783 831 783 829 920 820 1201 776 1201z" fill="#8280c2" />
        <path d="M757 988 763 984 785 984 783 1112 760 1110 753 1105z" fill="#c40e10" />
        <path d="M776 1201 784 1201 824 1538 814 1525z" fill="#2e0894" />
        <path d="M780 1201 820 1201 863 1535 822 1537z" fill="#3c0dc6" />
        <path d="M820 1537 863 1535 861 1648 822 1650 805 1643 826 1632z" fill="#4c2aac" />
      </g>

      {/* axes */}
      <g transform="translate(929 220) scale(.33333)" fill="none" strokeWidth="3">
        <path d="M682 148 680 168 680 267" stroke="#00f" />
        <path d="M682 72 701 68 701 75 683 145 698 142M672 572 689 572 672 620 686 622M710 553 710 560 706 566" stroke="#fff" />
        <path d="M671 620 668 750 664 860 663 1073" stroke="#ff0" />
      </g>
      <g transform="translate(1150 530) scale(.33333)" fill="none" strokeWidth="3">
        <path d="M5 143 365 115M12 148 260 230" stroke="#ff0" />
        <path d="M375 115 714 91" stroke="#0f0" />
        <path d="M260 232 617 352" stroke="#f00" />
        <path d="M-22 145 25 141M1 118 1 170" stroke="#2f2" />
        <path d="M726 91h57M753 88h8M363 118h69M390 113h24M459 121h15M360 241h18M262 232 300 232 325 233 330 236M285 235 302 230 308 226M617 352 668 352 725 355M655 361 680 352 695 343" stroke="#fff" />
      </g>
    </svg>
  );
}

function Viewport() {
  return (
    <main className="flex min-h-0 flex-1 flex-col border-l border-t border-[#a0a0a0]">
      <div className="flex min-h-0 flex-1 border-l border-t border-[#696969]">
        <div className="relative flex-1 overflow-hidden bg-black">
          <Scene />
        </div>
        <div className="flex w-[13px] flex-col overflow-hidden border-l border-white bg-[#f0f0f0] text-[#505050]">
          <button type="button" aria-label="Scroll up" className="flex h-[17px] w-[17px] items-center justify-center">
            <ChevronUp className="h-3 w-3" strokeWidth={3} />
          </button>
          <div className="grow-[392]" />
          <div className="h-[17px] bg-[#cdcdcd]" />
          <div className="grow-[429]" />
          <button type="button" aria-label="Scroll down" className="flex h-[17px] w-[17px] items-center justify-center">
            <ChevronDown className="h-3 w-3" strokeWidth={3} />
          </button>
        </div>
      </div>
      <div className="flex h-[19px] items-center border-b-2 border-t border-b-[#e3e3e3] border-t-white bg-[#f0f0f0] pr-[13px] text-[#505050]">
        <button type="button" aria-label="Scroll left" className="flex h-4 w-[17px] items-center justify-center">
          <ChevronLeft className="h-3 w-3" strokeWidth={3} />
        </button>
        <div className="grow-[1194]" />
        <div className="h-4 w-[17px] bg-[#cdcdcd]" />
        <div className="grow-[533]" />
        <button type="button" aria-label="Scroll right" className="flex h-4 w-[17px] items-center justify-center">
          <ChevronRight className="h-3 w-3" strokeWidth={3} />
        </button>
      </div>
    </main>
  );
}

/* ---------- header ---------- */

function ToolbarRow({ children }: { children: ReactNode }) {
  return (
    <div className="flex h-[31px] items-center border-b border-r border-[#3c62a6] bg-linear-to-b from-[#dce9fc] to-[#84aae2] pl-[3px] pt-[2px]">
      {children}
    </div>
  );
}

function Header() {
  return (
    <header className="flex h-[81px] bg-[#c4d9fa]">
      <div className="w-[505px] shrink-0">
        <ToolbarRow>
          <div className="flex gap-[5px]">
            {fileTools.map((group) => (
              <div key={group[0].name} className="flex">
                {group.map((tool) => <ToolButton key={tool.name} tool={tool} />)}
              </div>
            ))}
          </div>
        </ToolbarRow>
        <ToolbarRow>
          <div className="flex gap-[11px]">
            {viewTools.map((group) => (
              <div key={group[0].name} className="flex">
                {group.map((tool) => <ToolButton key={tool.name} tool={tool} />)}
              </div>
            ))}
          </div>
          <div className="ml-auto flex gap-[2px] pr-2">
            <button type="button" aria-label="Split rows" className="flex w-[23px] items-center justify-center">
              <Icon crisp>
                <path d="M.5 1.500h15v13H.5z" fill="#f4f4f4" stroke="#a0a4aa" />
                <path d="M1 2.500h14M1 9.500h14" stroke="#b4b4b4" />
              </Icon>
            </button>
            <button type="button" aria-label="Split columns" className="flex w-[23px] items-center justify-center">
              <Icon crisp>
                <path d="M.5 1.500h15v13H.5z" fill="#f4f4f4" stroke="#a0a4aa" />
                <path d="M1 2.500h14M10.500 3v11" stroke="#b4b4b4" />
              </Icon>
            </button>
          </div>
        </ToolbarRow>
        <p className="pl-[5px] leading-[18px]">Select name and path of file to import</p>
      </div>
      <nav aria-label="Modes" className="w-[378px] shrink-0">
        {modeRows.map((row, i) => (
          <div
            key={i}
            className="flex h-[41px] gap-px border-b border-r border-[#3c62a6] bg-linear-to-b from-[#dce9fc] to-[#84aae2] pl-px pt-px last:h-10 last:pt-0"
          >
            {row.map((mode) => <ModeButton key={mode.label.join("")} mode={mode} />)}
          </div>
        ))}
      </nav>
    </header>
  );
}

export default function App() {
  return (
    <div className="flex h-screen flex-col overflow-hidden bg-white font-['Liberation_Sans',Arial,sans-serif] text-[11px] text-black">
      <svg className="absolute h-0 w-0" aria-hidden="true">
        <defs>
          <linearGradient id="arrowFill" x1="0" y1="0" x2="0" y2="1">
            <stop offset="0" stopColor="#9fd0f8" />
            <stop offset="1" stopColor="#2a6cb4" />
          </linearGradient>
          <linearGradient id="pageFill" x1="0" y1="0" x2="1" y2="1">
            <stop offset="0" stopColor="#fff" />
            <stop offset="1" stopColor="#b9cff2" />
          </linearGradient>
          <linearGradient id="partFill" x1="0" y1="0" x2="1" y2="1">
            <stop offset="0" stopColor="#2f6cab" />
            <stop offset="1" stopColor="#c4dcf8" />
          </linearGradient>
        </defs>
      </svg>

      <div className="flex h-2 shrink-0 items-end justify-between overflow-hidden font-['Open_Sans',sans-serif] text-xs leading-4">
        <div className="flex items-end gap-[5px]">
          <svg viewBox="0 0 15 8" className="h-2 w-[15px]" fill="none" aria-hidden="true">
            <path d="M0 0h14v3.500H0" fill="#eee" stroke="#888" />
            <path d="M5.500 0v3" stroke="#4a6" strokeWidth="2" />
          </svg>
          <h1>Vision - Radan 3D Modelling Mode - [Active Assembly: */*]</h1>
        </div>
        <svg viewBox="0 0 70 8" className="h-2 w-[70px]" fill="none" stroke="#000" aria-hidden="true">
          <path d="M0 .5h8M46.500 0v1M55.500 0v1" />
        </svg>
      </div>
      <nav className="flex h-[21px] shrink-0 gap-3 border-b-2 border-[#f0f0f0] pl-1 font-['Open_Sans',sans-serif] text-xs">
        {MENU.map((item) => (
          <button key={item} type="button" className="h-[19px] leading-[21px]">{item}</button>
        ))}
      </nav>

      <div className="flex min-h-0 flex-1">
        <Sidebar />
        <div className="flex min-w-0 flex-1 flex-col">
          <Header />
          <Viewport />
        </div>
      </div>
    </div>
  );
}
